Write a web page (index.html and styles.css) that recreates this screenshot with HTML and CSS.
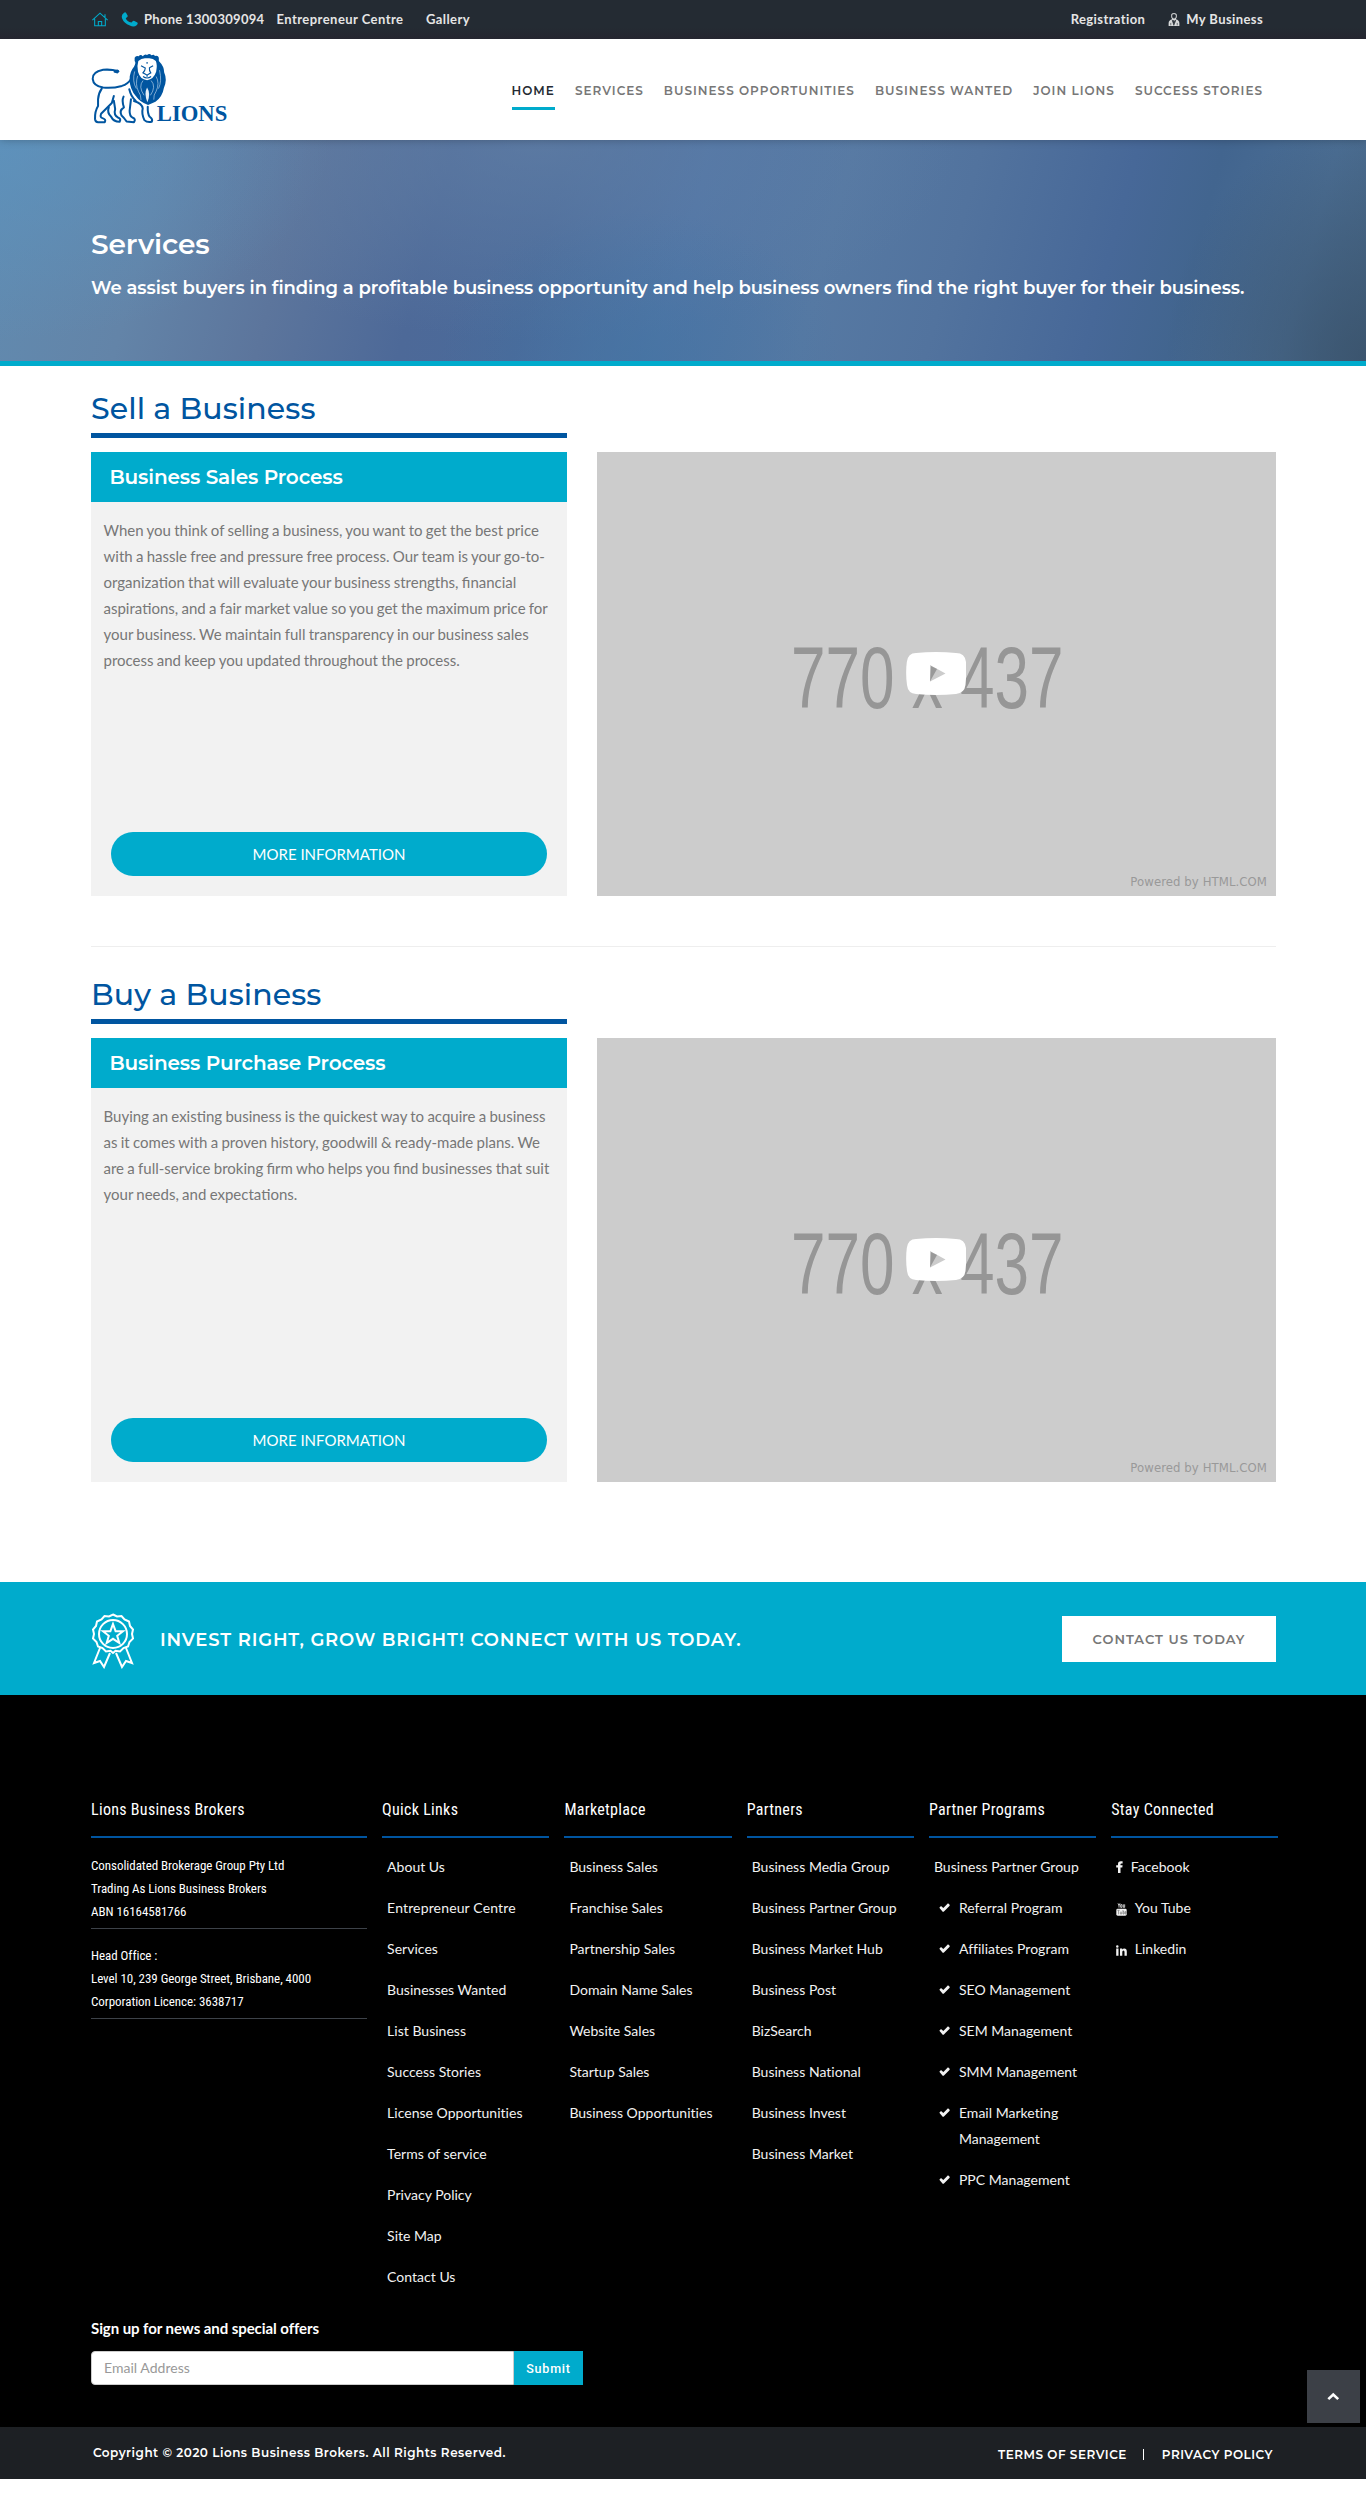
FILE: index.html
```html
<!DOCTYPE html>
<html lang="en">
<head>
<meta charset="utf-8">
<title>Services - Lions Business Brokers</title>
<link rel="stylesheet" href="styles.css">
</head>
<body>
<svg class="defs" width="0" height="0" aria-hidden="true">
  <symbol id="check" viewBox="0 0 33 27"><path d="M1 14L6 9L13 15L27 1L32 5L32 8L14 26L11 26Z"/></symbol>
  <symbol id="play" viewBox="0 0 60 43"><path fill="#fff" d="M10 1Q30-1 50 1Q59 1 60 10Q60.600 21 59.500 33Q58.500 41 50 42Q30 44 10 42Q2 41.500 1 33Q-.6 21 .8 10Q2 1 10 1Z"/><path fill="#ccc" d="M24 13L39.500 21.500L24 29.500Z"/><path fill="#999" d="M25 14L31 17L24 29.500Z"/></symbol>
</svg>

<div class="topbar">
  <div class="container topbar-row">
    <div class="topbar-left">
      <svg class="ico-home" viewBox="0 0 48 44" fill="none" stroke="#00abcc" stroke-width="3.200"><path d="M1 24L24 3L47 24M8 20V41H40V20M19 41V28H29V41M39 15V6"/></svg>
      <svg class="ico-phone" viewBox="0 0 50 44" fill="#00abcc"><path d="M9 2Q13-1 16 4L20 12Q20 15 14 18Q17 28 31 31Q35 25 38 26L48 31Q51 35 46 39Q38 46 26 40Q8 32 3 18Q0 8 9 2Z"/></svg>
      <a class="phone">Phone 1300309094</a><a class="centre">Entrepreneur Centre</a><a class="gallery">Gallery</a>
    </div>
    <div class="topbar-right">
      <a>Registration</a>
      <svg class="ico-user" viewBox="0 0 39 44"><path d="M10 10Q10 1 19 1Q29 1 29 10Q29 17 25 21Q37 24 37 34V43H2V34Q2 24 14 21Q10 17 10 10Z" fill="#d8dadb"/><path d="M14 10Q14 5 19 5Q25 5 25 10Q25 18 19.500 18Q14 18 14 10M14 24L19 41L25 24L22 31L19 24L17 31ZM9 33V41M30 33V41" fill="#242b33" stroke="#242b33" stroke-width="2"/></svg>
      <a class="business">My Business</a>
    </div>
  </div>
</div>

<header class="header">
  <div class="container header-row">
    <svg class="logo" viewBox="36 160 408 212" role="img" aria-label="Lions">
      <g fill="none" stroke="#0055a0" stroke-width="6" stroke-linecap="round" stroke-linejoin="round">
        <path d="M117 214Q96 208 72 210Q40 216 41 237Q43 258 72 263Q100 266 128 258Q146 252 155 238"/>
        <path d="M68 266Q58 280 57 298L57 318Q47 334 48 357Q49 366 57 366L77 366Q82 358 70 354Q62 352 66 341L98 309L104 288"/>
        <path d="M89 322Q83 338 96 350Q103 365 121 365Q127 356 116 352Q103 345 108 327L104 302"/>
        <path d="M133 290Q127 302 134 322Q119 332 127 346Q134 352 142 364L164 366Q171 356 159 352Q151 348 151 332L155 298"/>
        <path d="M164 303Q188 310 190 325Q186 340 195 360Q203 368 217 365Q221 357 211 350Q204 341 205 320"/>
        <path d="M150 268Q155 290 169 302"/>
      </g>
      <path fill="#0055a0" d="M103 211L116 209L121 215L115 221L104 218ZM166 174Q170 166 178 170Q184 162 190 170Q197 161 203 166Q210 160 216 167Q224 162 226 169Q236 166 238 174L238 184Q254 200 254 218Q264 240 253 264Q249 290 228 305L206 315Q181 306 170 289Q151 267 151 238Q151 216 164 201Q171 189 166 184Z"/>
      <path fill="#fff" d="M177 184Q188 173 203 176Q219 173 229 184Q234 195 230 216Q223 238 203 241Q182 239 176 216Q172 199 177 184Z"/>
      <g fill="none" stroke="#0055a0" stroke-width="3.500"><path d="M185 198L196 204M221 198L210 204M198 203Q197 214 191 219L203 226L214 219Q209 214 210 203M203 226V231M191 230Q203 239 215 230M203 187V192"/></g>
      <g fill="none" stroke="#b9d2e8" stroke-width="2"><path d="M166 215Q158 244 171 266M175 228Q167 252 177 274Q185 284 185 300M240 211Q248 244 237 266M230 230Q241 250 230 274Q222 284 223 299M191 242Q176 260 194 286M215 242Q231 260 213 286"/></g>
      <path fill="#e8f1f8" d="M203 263Q193 282 204 307Q215 282 203 263Z"/>
      <text x="232" y="363" textLength="210" lengthAdjust="spacingAndGlyphs" class="logo-text">LIONS</text>
    </svg>
    <nav class="nav">
      <a class="active">HOME</a><a>SERVICES</a><a>BUSINESS OPPORTUNITIES</a><a>BUSINESS WANTED</a><a>JOIN LIONS</a><a>SUCCESS STORIES</a>
    </nav>
  </div>
</header>

<section class="hero">
  <div class="container">
    <h1>Services</h1>
    <p>We assist buyers in finding a profitable business opportunity and help business owners find the right buyer for their business.</p>
  </div>
</section>

<main class="container main">
  <section class="service">
    <h2>Sell a Business</h2>
    <div class="service-row">
      <div class="card">
        <h3>Business Sales Process</h3>
        <p>When you think of selling a business, you want to get the best price<br>with a hassle free and pressure free process. Our team is your go-to-<br>organization that will evaluate your business strengths, financial<br>aspirations, and a fair market value so you get the maximum price for<br>your business. We maintain full transparency in our business sales<br>process and keep you updated throughout the process.</p>
        <a class="more">MORE INFORMATION</a>
      </div>
      <div class="video">
        <span class="size">770 x 437</span>
        <svg class="play"><use href="#play"/></svg>
        <span class="powered">Powered by HTML.COM</span>
      </div>
    </div>
  </section>
  <hr>
  <section class="service">
    <h2>Buy a Business</h2>
    <div class="service-row">
      <div class="card">
        <h3>Business Purchase Process</h3>
        <p>Buying an existing business is the quickest way to acquire a business<br>as it comes with a proven history, goodwill &amp; ready-made plans. We<br>are a full-service broking firm who helps you find businesses that suit<br>your needs, and expectations.</p>
        <a class="more">MORE INFORMATION</a>
      </div>
      <div class="video">
        <span class="size">770 x 437</span>
        <svg class="play"><use href="#play"/></svg>
        <span class="powered">Powered by HTML.COM</span>
      </div>
    </div>
  </section>
</main>

<section class="cta">
  <div class="container cta-row">
    <svg class="ribbon" viewBox="0 0 44 56" fill="none" stroke="#fff" stroke-width="2">
      <path d="M22 1.500L26 3.500L30.500 3L33.500 6.500L38 8.500L39 13L42 16.500L41 21L42 25.500L38.500 29L37 33.500L32.500 35L29 38.500L24.500 37.700L22 40L19.500 37.700L15 38.500L11.500 35L7 33.500L5.500 29L2 25.500L3 21L2 16.500L5 13L6 8.500L10.500 6.500L13.500 3L18 3.500Z"/>
      <circle cx="22" cy="21" r="14"/>
      <path d="M22 11L24.600 18.200L32 18.300L26.200 22.800L28.300 30L22 25.800L15.700 30L17.800 22.800L12 18.300L19.400 18.200Z"/>
      <path d="M9 35L3 50L9 48L13 54L19 40M35 35L41 50L35 48L31 54L25 40"/>
    </svg>
    <h2>INVEST RIGHT, GROW BRIGHT! CONNECT WITH US TODAY.</h2>
    <a class="contact">CONTACT US TODAY</a>
  </div>
</section>

<footer class="footer">
  <div class="container columns">
    <div class="col about">
      <h4>Lions Business Brokers</h4>
      <p>Consolidated Brokerage Group Pty Ltd<br>Trading As Lions Business Brokers<br>ABN 16164581766</p>
      <p>Head Office :<br>Level 10, 239 George Street, Brisbane, 4000<br>Corporation Licence: 3638717</p>
    </div>
    <div class="col">
      <h4>Quick Links</h4>
      <ul><li>About Us</li><li class="wide">Entrepreneur Centre</li><li>Services</li><li>Businesses Wanted</li><li>List Business</li><li>Success Stories</li><li>License Opportunities</li><li>Terms of service</li><li>Privacy Policy</li><li>Site Map</li><li>Contact Us</li></ul>
    </div>
    <div class="col">
      <h4>Marketplace</h4>
      <ul><li>Business Sales</li><li>Franchise Sales</li><li>Partnership Sales</li><li>Domain Name Sales</li><li>Website Sales</li><li>Startup Sales</li><li>Business Opportunities</li></ul>
    </div>
    <div class="col">
      <h4>Partners</h4>
      <ul><li>Business Media Group</li><li>Business Partner Group</li><li>Business Market Hub</li><li>Business Post</li><li>BizSearch</li><li>Business National</li><li>Business Invest</li><li>Business Market</li></ul>
    </div>
    <div class="col">
      <h4>Partner Programs</h4>
      <ul>
        <li>Business Partner Group</li>
        <li class="tick"><svg><use href="#check"/></svg><span>Referral Program</span></li>
        <li class="tick"><svg><use href="#check"/></svg><span>Affiliates Program</span></li>
        <li class="tick"><svg><use href="#check"/></svg><span>SEO Management</span></li>
        <li class="tick"><svg><use href="#check"/></svg><span>SEM Management</span></li>
        <li class="tick"><svg><use href="#check"/></svg><span>SMM Management</span></li>
        <li class="tick"><svg><use href="#check"/></svg><span>Email Marketing Management</span></li>
        <li class="tick"><svg><use href="#check"/></svg><span>PPC Management</span></li>
      </ul>
    </div>
    <div class="col">
      <h4>Stay Connected</h4>
      <ul>
        <li class="social"><svg class="fb" viewBox="0 0 7 12"><path d="M2 12V6.500H.2V4.300H2V3Q2 .3 4.800.3H6.600V2.500H5.400Q4.500 2.500 4.500 3.300V4.300H6.600L6.300 6.500H4.500V12Z"/></svg>Facebook</li>
        <li class="social"><svg class="yt" viewBox="0 0 33 39"><rect x="1" y="17" width="31" height="21" rx="4"/><path d="M6 1L9 8V14M12 1L9 8M14 5H18V13H14ZM22 4V13H26V4" fill="none" stroke="#e6e6e6" stroke-width="2.500"/><path d="M4 22H11M7.500 22V34M13 26V33H17V26M21 21V33H24V26H21M27 30H30V26H27V33H30" fill="none" stroke="#777" stroke-width="2"/></svg>You Tube</li>
        <li class="social"><svg class="in" viewBox="0 0 11 11"><path d="M.2 3.600H2.500V10.800H.2ZM1.300.2A1.200 1.200 0 1 1 1.300 2.700A1.200 1.200 0 1 1 1.300.2M4 3.600H6.200V4.600Q7 3.400 8.300 3.400Q10.800 3.400 10.800 6.500V10.800H8.500V7Q8.500 5.400 7.500 5.400Q6.300 5.400 6.300 7V10.800H4Z"/></svg>Linkedin</li>
      </ul>
    </div>
  </div>
  <div class="container signup">
    <h5>Sign up for news and special offers</h5>
    <form class="signup-form"><input type="text" placeholder="Email Address"><button type="button">Submit</button></form>
  </div>
</footer>

<div class="bottom">
  <div class="container bottom-row">
    <p>Copyright © 2020 Lions Business Brokers. All Rights Reserved.</p>
    <div class="legal"><a>TERMS OF SERVICE</a><i></i><a>PRIVACY POLICY</a></div>
  </div>
  <a class="to-top"><svg viewBox="0 0 38 26"><path d="M4 21L19 7L34 21" fill="none" stroke="#fff" stroke-width="8"/></svg></a>
</div>
</body>
</html>
```
FILE: styles.css
```css
* { box-sizing: border-box; }
body { margin: 0; background: #fff; color: #777; font: 15px/26px Lato, "Liberation Sans", sans-serif; }
h1, h2, h3, h4, h5, p, ul { margin: 0; padding: 0; font-weight: 400; }
ul { list-style: none; }
.defs { position: absolute; }
.container { width: 1185px; margin: 0 90px 0 91px; }

.topbar { height: 39px; background: linear-gradient(#242b33 70%, #252530); color: #e5e5e5; font-size: 13px; font-weight: 700; letter-spacing: .3px; }
.topbar-row, .topbar-left, .topbar-right { display: flex; align-items: center; }
.topbar-row { height: 38px; justify-content: space-between; padding: 0 13px 0 1px; }
.ico-home { width: 16px; height: 15px; }
.ico-phone { width: 17px; height: 15px; margin: 0 6px 0 13px; }
.phone { width: 132.500px; }
.centre { width: 149.500px; letter-spacing: .45px; }
.gallery { letter-spacing: .4px; }
.topbar-right { letter-spacing: .4px; }
.ico-user { width: 12px; height: 15px; margin: 1px 6px 0 23px; }

.header { position: relative; height: 101px; background: #fff; box-shadow: 0 0 8px rgba(0, 0, 0, .25); clip-path: inset(0 0 -12px); }
.header-row { display: flex; justify-content: space-between; padding: 14px 13px 0 0; }
.logo { width: 137px; height: 71.200px; overflow: visible; }
.logo-text { font: 700 67px "Liberation Serif", serif; fill: #0055a0; }
.nav { display: flex; gap: 20px; padding-top: 24px; font: 600 12px/28px Montserrat, Inter, sans-serif; letter-spacing: 1px; color: #777; }
.active { height: 32.500px; color: #242b33; border-bottom: 3px solid #00abcc; }

.hero {
  height: 226px; padding-top: 90px; border-bottom: 5px solid #00abcc; color: #fff; font-family: Montserrat, Inter, sans-serif;
  background:
    radial-gradient(ellipse 330px 200px at 0 0, rgba(92, 148, 192, .7), rgba(92, 148, 192, 0)),
    radial-gradient(ellipse 200px 240px at 100% 100%, rgba(56, 80, 104, .8), rgba(56, 80, 104, 0)),
    radial-gradient(ellipse 200px 150px at 640px 100%, rgba(66, 116, 162, .6), rgba(66, 116, 162, 0)),
    radial-gradient(ellipse 420px 200px at 540px 0, rgba(98, 128, 166, .7), rgba(98, 128, 166, 0)),
    linear-gradient(105deg, #618bb0 0, #6384a8 12%, #5c759c 22%, #4d6998 32%, #4a6a9a 40%, #5075a6 50%, #5679a3 60%, #52739e 69%, #476898 80%, #42658f 86%, #4b6e94 94%, #486888 100%);
}
.hero h1 { font-size: 28px; font-weight: 600; line-height: 28px; letter-spacing: -.1px; }
.hero p { margin-top: 17px; font-size: 18px; font-weight: 600; line-height: 26px; letter-spacing: -.086px; white-space: nowrap; }

.main { height: 1216px; padding-top: 28px; }
.service { height: 502px; }
.service > h2 { width: 476px; height: 44px; border-bottom: 5px solid #0055a0; color: #0055a0; font: 500 30px/30px Montserrat, Inter, sans-serif; letter-spacing: .1px; }
.service-row { display: flex; justify-content: space-between; margin-top: 14px; }
.card { display: flex; flex-direction: column; width: 476px; height: 444px; background: #f2f2f2; }
.card h3 { height: 50px; padding-left: 18.500px; background: #00abcc; color: #fff; font: 600 20px/50px Montserrat, Inter, sans-serif; letter-spacing: -.12px; }
.card p { padding: 15px 0 0 12.500px; word-spacing: -.55px; white-space: nowrap; }
.more { height: 44px; margin: auto 20px 20px; border-radius: 22px; background: #00abcc; color: #fff; text-align: center; line-height: 45px; }
.video { position: relative; width: 679px; height: 444px; background: #ccc; }
.size { position: absolute; left: 194px; top: 178px; color: #969696; font: 87px/96px "Liberation Sans", sans-serif; white-space: nowrap; transform: scaleX(.713); transform-origin: 0 0; }
.play { position: absolute; left: 309px; top: 200px; width: 60px; height: 43px; }
.powered { position: absolute; right: 9px; bottom: 5px; color: #999; font: 13px/18px "DejaVu Sans Condensed", "DejaVu Sans", sans-serif; letter-spacing: .08px; }
.main hr { height: 1px; margin: 50px 0 33px; border: 0; background: #eee; }

.cta { height: 113px; background: #00abcc; }
.cta-row { display: flex; align-items: center; height: 113px; }
.ribbon { width: 44px; height: 56px; margin-top: 4px; }
.cta h2 { margin: 2px auto 0 25px; color: #fff; font: 600 18px/24px Montserrat, Inter, sans-serif; letter-spacing: .82px; }
.contact { width: 214px; height: 46px; background: #fff; font: 600 13px/46px Montserrat, Inter, sans-serif; letter-spacing: 1px; text-align: center; }

.footer { height: 732px; background: #000; color: #f2f2f2; }
.columns { display: grid; grid-template-columns: 276px repeat(5, 167.200px); gap: 15.100px; width: 1188px; height: 620px; padding-top: 101px; }
.col h4 { height: 42px; border-bottom: 2px solid #0055a0; font: 400 16px/27px "Roboto Condensed", Roboto, sans-serif; letter-spacing: .3px; color: #fff; }
.col ul { padding: 16px 0 0 5px; font-size: 14px; letter-spacing: .02px; }
.col li { margin-bottom: 15px; white-space: nowrap; }
.col .wide { letter-spacing: .15px; }
.about p { height: 71px; margin-bottom: 15px; border-bottom: 1px solid #3d4249; font: 450 13px/23px "Roboto Condensed", Roboto, sans-serif; letter-spacing: -.05px; white-space: nowrap; color: #fff; }
.about h4 + p { height: 75px; margin-top: 16px; }
.about p + p { height: 75px; }
.col .tick { display: flex; white-space: normal; }
.tick svg { flex: none; width: 11px; height: 9px; margin: 8px 9px 0 5px; fill: #f2f2f2; }
.social { display: flex; align-items: center; }
.social svg { margin-right: 7.500px; fill: #f2f2f2; }
.fb { width: 7px; height: 12px; }
.yt { width: 11px; height: 13px; margin-top: 3px; }
.in { width: 11px; height: 11px; margin-top: 3px; }
.signup h5 { color: #fff; font-size: 15px; font-weight: 700; line-height: 26px; letter-spacing: -.07px; }
.signup-form { display: flex; margin-top: 10px; }
.signup-form input { width: 423px; height: 34px; padding: 0 12px 2px; border: 1px solid #ccc; border-radius: 4px 0 0 4px; background: #fff; font: 14px Lato, sans-serif; letter-spacing: .03px; }
.signup-form input::placeholder { color: #999; }
.signup-form button { width: 69px; height: 34px; padding: 0; border: 0; background: #00abcc; color: #fff; font: 500 12.500px Roboto, sans-serif; letter-spacing: .8px; }

.bottom { position: relative; height: 52px; background: #1d2024; color: #fff; font: 600 12px/52px Montserrat, Inter, sans-serif; letter-spacing: .5px; }
.bottom-row { display: flex; justify-content: space-between; padding: 0 3px 0 2px; }
.bottom-row p { font-weight: 600; line-height: 51px; }
.legal { display: flex; align-items: center; height: 52px; padding-top: 3px; }
.legal i { width: 1px; height: 11px; margin: 0 18px 0 16px; background: #fff; }
.to-top { position: absolute; right: 6px; bottom: 56px; display: flex; align-items: center; justify-content: center; width: 53px; height: 53px; background: #3c4047; }
.to-top svg { width: 12.500px; height: 9px; }
```
